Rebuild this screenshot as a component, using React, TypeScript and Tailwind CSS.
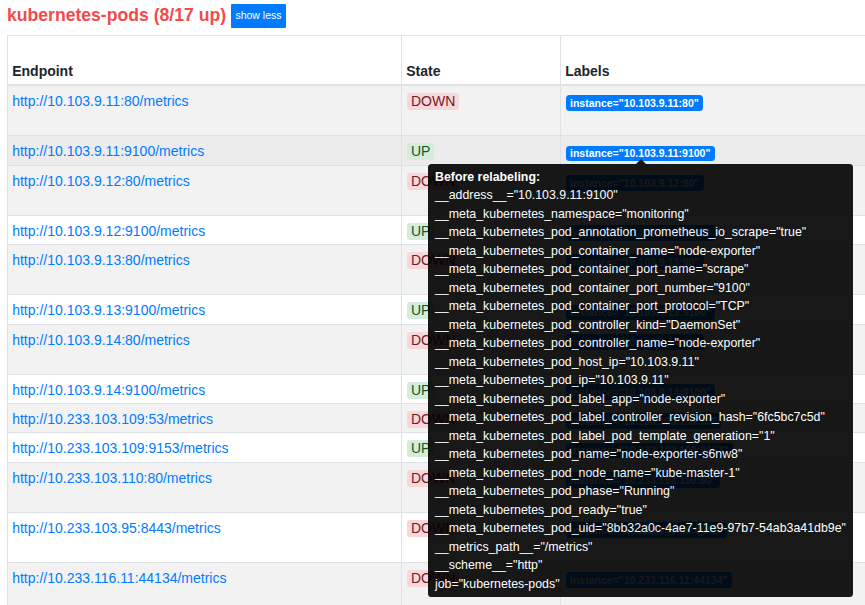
import React from "react";

type Row = { url: string; up: boolean; label: string; tall: boolean };

const rows: Row[] = [
  { url: "http://10.103.9.11:80/metrics", up: false, label: 'instance="10.103.9.11:80"', tall: true },
  { url: "http://10.103.9.11:9100/metrics", up: true, label: 'instance="10.103.9.11:9100"', tall: false },
  { url: "http://10.103.9.12:80/metrics", up: false, label: 'instance="10.103.9.12:80"', tall: true },
  { url: "http://10.103.9.12:9100/metrics", up: true, label: 'instance="10.103.9.12:9100"', tall: false },
  { url: "http://10.103.9.13:80/metrics", up: false, label: 'instance="10.103.9.13:80"', tall: true },
  { url: "http://10.103.9.13:9100/metrics", up: true, label: 'instance="10.103.9.13:9100"', tall: false },
  { url: "http://10.103.9.14:80/metrics", up: false, label: 'instance="10.103.9.14:80"', tall: true },
  { url: "http://10.103.9.14:9100/metrics", up: true, label: 'instance="10.103.9.14:9100"', tall: false },
  { url: "http://10.233.103.109:53/metrics", up: false, label: 'instance="10.233.103.109:53"', tall: false },
  { url: "http://10.233.103.109:9153/metrics", up: true, label: 'instance="10.233.103.109:9153"', tall: false },
  { url: "http://10.233.103.110:80/metrics", up: false, label: 'instance="10.233.103.110:80"', tall: true },
  { url: "http://10.233.103.95:8443/metrics", up: false, label: 'instance="10.233.103.95:8443"', tall: true },
  { url: "http://10.233.116.11:44134/metrics", up: false, label: 'instance="10.233.116.11:44134"', tall: true },
];

const tipLines = [
  '__address__="10.103.9.11:9100"',
  '__meta_kubernetes_namespace="monitoring"',
  '__meta_kubernetes_pod_annotation_prometheus_io_scrape="true"',
  '__meta_kubernetes_pod_container_name="node-exporter"',
  '__meta_kubernetes_pod_container_port_name="scrape"',
  '__meta_kubernetes_pod_container_port_number="9100"',
  '__meta_kubernetes_pod_container_port_protocol="TCP"',
  '__meta_kubernetes_pod_controller_kind="DaemonSet"',
  '__meta_kubernetes_pod_controller_name="node-exporter"',
  '__meta_kubernetes_pod_host_ip="10.103.9.11"',
  '__meta_kubernetes_pod_ip="10.103.9.11"',
  '__meta_kubernetes_pod_label_app="node-exporter"',
  '__meta_kubernetes_pod_label_controller_revision_hash="6fc5bc7c5d"',
  '__meta_kubernetes_pod_label_pod_template_generation="1"',
  '__meta_kubernetes_pod_name="node-exporter-s6nw8"',
  '__meta_kubernetes_pod_node_name="kube-master-1"',
  '__meta_kubernetes_pod_phase="Running"',
  '__meta_kubernetes_pod_ready="true"',
  '__meta_kubernetes_pod_uid="8bb32a0c-4ae7-11e9-97b7-54ab3a41db9e"',
  '__metrics_path__="/metrics"',
  '__scheme__="http"',
  'job="kubernetes-pods"',
];

export default function App() {
  return (
    <div className="relative w-[865px] h-[605px] overflow-hidden bg-white font-['Liberation_Sans',Arial,sans-serif] text-[14px] text-[#212529]">
      <div className="flex items-start h-[35px] pl-[7px] pt-[4px]">
        <span className="text-[17.6px] font-bold leading-[23.7px] text-[#f44a4a]">kubernetes-pods (8/17 up)</span>
        <span className="ml-[5px] flex items-center justify-center w-[55px] h-[23.7px] bg-[#007bff] text-white text-[10.5px] rounded-[1px]">
          show less
        </span>
      </div>
      <div className="ml-[7px] w-[1000px] border-l border-t border-[#dee2e6]">
        <div className="flex h-[49px] border-b border-[#dee2e6] font-bold">
          <div className="w-[393px] flex items-end pl-[4.2px] pb-[2px] leading-[21px]">Endpoint</div>
          <div className="w-[159px] border-l border-[#dee2e6] flex items-end pl-[4.2px] pb-[2px] leading-[21px]">State</div>
          <div className="flex-1 border-l border-[#dee2e6] flex items-end pl-[4.2px] pb-[2px] leading-[21px]">Labels</div>
        </div>
        {rows.map((r, i) => {
          const bg = i === 1 ? "bg-[#ececec]" : i % 2 === 0 ? "bg-[#f2f2f2]" : "bg-white";
          return (
            <div
              key={r.url}
              className={`flex border-t border-[#dee2e6] ${bg} ${r.tall ? "h-[50.25px]" : "h-[29.25px]"}`}
            >
              <div className="w-[393px] pl-[4.2px] pt-[5px] leading-[21px] text-[#007bff]">{r.url}</div>
              <div className="w-[159px] border-l border-[#dee2e6] pl-[5px] pt-[5px]">
                <span
                  className={`inline-block px-[4px] leading-[17px] rounded-[3px] ${
                    r.up ? "bg-[#d4edda] text-[#155724]" : "bg-[#f8d7da] text-[#721c24]"
                  }`}
                >
                  {r.up ? "UP" : "DOWN"}
                </span>
              </div>
              <div className="flex-1 border-l border-[#dee2e6] pl-[4.8px] pt-[6px]">
                <span className="inline-block px-[4.2px] py-[2.6px] text-[10.5px] leading-[10.5px] font-bold text-white bg-[#007bff] rounded-[3.5px]">
                  {r.label}
                </span>
              </div>
            </div>
          );
        })}
      </div>
      <div className="absolute left-[428px] top-[159px] opacity-90">
        <div className="ml-[207.5px] w-0 h-0 border-x-[5.6px] border-x-transparent border-b-[5.6px] border-b-black" />
        <div className="bg-black text-white rounded-[3.5px] px-[7px] py-[3.5px] text-[12.36px] leading-[18.5px] whitespace-nowrap">
          <div className="font-bold">Before relabeling:</div>
          {tipLines.map((l) => (
            <div key={l}>{l}</div>
          ))}
        </div>
      </div>
    </div>
  );
}
